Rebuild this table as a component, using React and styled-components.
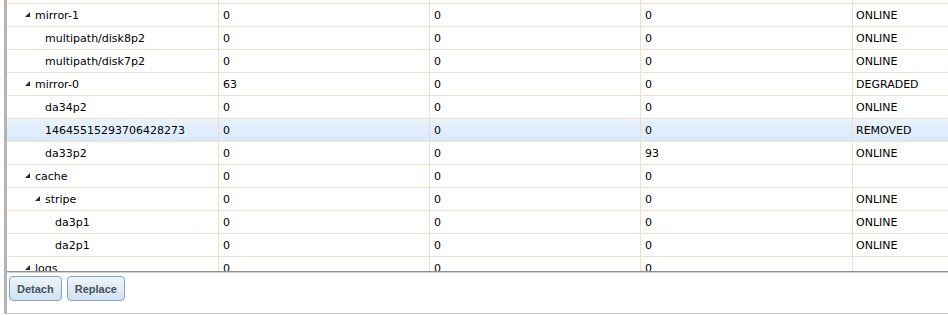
import React, { useLayoutEffect, useRef } from 'react'
import styled, { createGlobalStyle, css } from 'styled-components';

const GlobalStyle = createGlobalStyle`
  html, body {
    margin: 0;
    padding: 0;
    background: #fff;
  }
  body {
    font-family: "DejaVu Sans", Verdana, sans-serif;
  }
`;

const rows = [
  { name: 'data', level: 0, parent: true, vals: ['0', '0', '0', 'ONLINE'] },
  { name: 'mirror-1', level: 1, parent: true, vals: ['0', '0', '0', 'ONLINE'] },
  { name: 'multipath/disk8p2', level: 2, vals: ['0', '0', '0', 'ONLINE'] },
  { name: 'multipath/disk7p2', level: 2, vals: ['0', '0', '0', 'ONLINE'] },
  { name: 'mirror-0', level: 1, parent: true, vals: ['63', '0', '0', 'DEGRADED'] },
  { name: 'da34p2', level: 2, vals: ['0', '0', '0', 'ONLINE'] },
  { name: '14645515293706428273', level: 2, selected: true, vals: ['0', '0', '0', 'REMOVED'] },
  { name: 'da33p2', level: 2, vals: ['0', '0', '93', 'ONLINE'] },
  { name: 'cache', level: 1, parent: true, vals: ['0', '0', '0', ''] },
  { name: 'stripe', level: 2, parent: true, vals: ['0', '0', '0', 'ONLINE'] },
  { name: 'da3p1', level: 3, vals: ['0', '0', '0', 'ONLINE'] },
  { name: 'da2p1', level: 3, vals: ['0', '0', '0', 'ONLINE'] },
  { name: 'logs', level: 1, parent: true, vals: ['0', '0', '0', ''] },
  { name: 'da1p1', level: 2, vals: ['0', '0', '0', 'ONLINE'] },
];

export default function App() {
  const bodyRef = useRef(null);

  // the grid is scrolled a little, so the row above mirror-1 is cut off
  useLayoutEffect(() => {
    if (bodyRef.current) bodyRef.current.scrollTop = 19;
  }, []);

  return (
    <>
      <GlobalStyle />
      <Panel>
        <GridBody ref={bodyRef}>
          {rows.map((r, i) => (
            <Row key={i} $selected={r.selected}>
              <TreeCell>
                <Indent $level={r.level} />
                <Expander>
                  {r.parent && (
                    <svg width="6" height="6" viewBox="0 0 6 6">
                      <polygon points="5,0 5,5 0,5" fill="#2b2b2b" />
                    </svg>
                  )}
                </Expander>
                <span>{r.name}</span>
              </TreeCell>
              {r.vals.map((v, j) => (
                <Cell key={j}>{v}</Cell>
              ))}
            </Row>
          ))}
        </GridBody>
        <Toolbar>
          <Button>Detach</Button>
          <Button>Replace</Button>
        </Toolbar>
      </Panel>
    </>
  )
}

const Panel = styled.div`
  display: flex;
  flex-direction: column;
  height: 314px;
  margin-left: 4px;
  border-left: 3px solid #b4b4b4;
  border-bottom: 1px solid #c4c8cc;
  box-sizing: border-box;
  overflow: hidden;
`;

const GridBody = styled.div`
  height: 272px;
  flex: none;
  overflow: hidden;
  box-sizing: border-box;
  border-bottom: 1px solid #8f8f8f;
  box-shadow: 0 1px 0 #cfcfcf;
`;

const Row = styled.div`
  display: grid;
  grid-template-columns: 211px 211px 211px 212px 1fr;
  height: 23px;
  box-sizing: border-box;
  border-bottom: 1px solid #f0e0cd;
  font-size: 11px;
  color: #000;
  ${(p) =>
    p.$selected &&
    css`
      background: linear-gradient(#e9f3fd, #d9e9fb);
    `}
`;

const Cell = styled.div`
  display: flex;
  align-items: center;
  padding-left: 4px;
  border-left: 1px solid #efddc8;
  white-space: nowrap;
  overflow: hidden;
  &:last-child {
    padding-left: 3px;
  }
`;

const TreeCell = styled.div`
  display: flex;
  align-items: center;
  padding-left: 8px;
  white-space: nowrap;
  overflow: hidden;
`;

const Indent = styled.div`
  width: ${(p) => p.$level * 10}px;
  flex: none;
`;

const Expander = styled.div`
  width: 10px;
  flex: none;
  display: flex;
  align-items: center;
  svg {
    display: block;
  }
`;

const Toolbar = styled.div`
  display: flex;
  align-items: flex-start;
  gap: 5px;
  padding: 4px 0 0 2px;
`;

const Button = styled.button`
  height: 25px;
  padding: 0 7px;
  font-family: "Liberation Sans", Arial, sans-serif;
  font-weight: bold;
  font-size: 11px;
  color: #46515c;
  background: linear-gradient(#eef4fb, #d0e1f3);
  border: 1px solid #84a4c4;
  border-radius: 4px;
  cursor: pointer;
`;
